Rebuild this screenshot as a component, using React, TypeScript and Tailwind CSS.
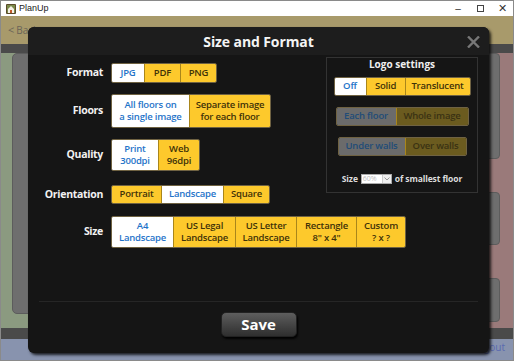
import React from "react";

/* 选项按钮的数据结构 */
type Opt = {
  lines: string[];
  w: string;
  on?: boolean;
};

type Tone = "normal" | "dim";

/* 一组分段按钮（外框 1px 计入尺寸） */
function Segmented({ opts, h, tone = "normal" }: { opts: Opt[]; h: string; tone?: Tone }) {
  return (
    <div className="flex rounded-[2px] border border-[#6f6242] overflow-hidden">
      {opts.map((o, i) => {
        let cls = "";
        if (tone === "normal") {
          cls = o.on ? "bg-white text-[#1f74c9]" : "bg-[#fdc92c] text-[#3f3208]";
        } else {
          cls = o.on ? "bg-[#6b6b6b] text-[#214c78]" : "bg-[#6b5b1f] text-[#3a3213]";
        }
        return (
          <div
            key={i}
            className={`${o.w} ${h} ${cls} ${i > 0 ? "border-l border-[#a9861b]" : ""} flex flex-col items-center justify-center text-[9.5px] leading-[12.5px] font-semibold tracking-[-0.2px]`}
          >
            {o.lines.map((l) => (
              <span key={l}>{l}</span>
            ))}
          </div>
        );
      })}
    </div>
  );
}

/* 左侧一行：标签 + 按钮组 */
function Row({ label, children, className = "" }: { label: string; children: React.ReactNode; className?: string }) {
  return (
    <div className={`flex items-center gap-[8px] ${className}`}>
      <div className="w-[75px] text-right text-[10.5px] font-bold tracking-[-0.3px] text-[#f2f2f2]">{label}</div>
      {children}
    </div>
  );
}

export default function App() {
  return (
    <div className="relative w-[514px] h-[361px] overflow-hidden border border-[#8a8a8a] font-['Open_Sans','Noto_Sans',sans-serif]">
      {/* 窗口标题栏 */}
      <div className="flex h-[15px] items-center bg-white font-['Liberation_Sans',sans-serif]">
        <svg width="10" height="10" viewBox="0 0 10 10" className="ml-[5px]">
          <rect width="10" height="10" rx="1" fill="#5b4a2a" />
          <rect x="1" y="1" width="8" height="8" fill="#7a8a4a" />
          <path d="M2 5 L5 2 L8 5 L8 9 L2 9 Z" fill="#f5f0e6" />
          <rect x="4" y="6" width="2" height="3" fill="#c05a2a" />
        </svg>
        <span className="ml-[3px] text-[9px] text-[#222]">PlanUp</span>
        <div className="ml-auto flex items-center text-[#333]">
          <span className="w-[22px] text-center text-[10px]">–</span>
          <span className="w-[22px] flex justify-center">
            <span className="block h-[7px] w-[7px] border border-[#444]" />
          </span>
          <span className="w-[22px] text-center text-[11px]">✕</span>
        </div>
      </div>

      {/* 应用顶部栏 */}
      <div className="flex h-[28px] items-center bg-[#a89a6b] pl-[7px] text-[10px] text-[#6a6558]">
        <span className="mr-[2px] text-[11px]">&lt;</span>
        <span>Back</span>
      </div>
      <div className="h-[9px] bg-[#4a4a4a]" />

      {/* 中间区域 */}
      <div className="flex h-[275px]">
        <div className="w-[470px] bg-[#8b9a80] pl-[11px] pb-[14px]">
          <div className="h-full rounded-l-[5px] border border-[#5c5c5c] bg-[#6e6e6e]" />
        </div>
        <div className="flex flex-1 flex-col gap-[33px] bg-[#9a7a7a] pb-[1px]">
          <div className="h-[106px] w-[29px] rounded-r-[4px] border border-[#5c5c5c] bg-[#6e6e6e]" />
          <div className="h-[53px] w-[29px] rounded-r-[4px] border border-[#5c5c5c] bg-[#6e6e6e]" />
          <div className="h-[44px] w-[29px] rounded-r-[4px] border border-[#5c5c5c] bg-[#6e6e6e]" />
        </div>
      </div>
      <div className="h-[11px] bg-[#4a4a4a]" />
      <div className="flex h-[22px] items-start justify-end bg-[#8893ae] pr-[8px] pt-[1px] text-[10px] text-[#5a6ab0]">
        Logout
      </div>

      {/* 弹窗 */}
      <div className="absolute left-[27px] top-[26px] flex h-[326px] w-[461px] flex-col rounded-[6px] bg-[#151515] shadow-[2px_2px_3px_rgba(0,0,0,0.8)]">
        <div className="relative flex h-[28px] items-center justify-center rounded-t-[6px] bg-[#1d1d1d]">
          <span className="text-[14px] font-bold tracking-[-0.1px] text-[#f4f4f4]">Size and Format</span>
          <svg width="13" height="12" viewBox="0 0 13 12" className="absolute right-[9px] top-[9px]">
            <path d="M1 0.5 L12 11.5 M12 0.5 L1 11.5" stroke="#777" strokeWidth="2.4" />
          </svg>
        </div>

        <div className="flex items-start">
          <div className="mt-[8px] flex flex-col">
            <Row label="Format">
              <Segmented
                h="h-[18px]"
                opts={[
                  { lines: ["JPG"], w: "w-[32px]", on: true },
                  { lines: ["PDF"], w: "w-[36px]" },
                  { lines: ["PNG"], w: "w-[36px]" },
                ]}
              />
            </Row>
            <Row label="Floors" className="mt-[11px]">
              <Segmented
                h="h-[32px]"
                opts={[
                  { lines: ["All floors on", "a single image"], w: "w-[77px]", on: true },
                  { lines: ["Separate image", "for each floor"], w: "w-[81px]" },
                ]}
              />
            </Row>
            <Row label="Quality" className="mt-[11px]">
              <Segmented
                h="h-[30px]"
                opts={[
                  { lines: ["Print", "300dpi"], w: "w-[46px]", on: true },
                  { lines: ["Web", "96dpi"], w: "w-[41px]" },
                ]}
              />
            </Row>
            <Row label="Orientation" className="mt-[14px]">
              <Segmented
                h="h-[17px]"
                opts={[
                  { lines: ["Portrait"], w: "w-[49px]" },
                  { lines: ["Landscape"], w: "w-[62px]", on: true },
                  { lines: ["Square"], w: "w-[46px]" },
                ]}
              />
            </Row>
          </div>

          {/* Logo 设置面板 */}
          <div className="ml-auto mr-[11px] mt-[2px] flex h-[136px] w-[152px] flex-col items-center border border-[#333]">
            <div className="mt-[-1px] text-[10px] font-bold text-[#eee]">Logo settings</div>
            <div className="mt-[5px]">
              <Segmented
                h="h-[17px]"
                opts={[
                  { lines: ["Off"], w: "w-[31px]", on: true },
                  { lines: ["Solid"], w: "w-[39px]" },
                  { lines: ["Translucent"], w: "w-[65px]" },
                ]}
              />
            </div>
            <div className="mt-[11px]">
              <Segmented
                tone="dim"
                h="h-[17px]"
                opts={[
                  { lines: ["Each floor"], w: "w-[59px]", on: true },
                  { lines: ["Whole image"], w: "w-[72px]" },
                ]}
              />
            </div>
            <div className="mt-[11px]">
              <Segmented
                tone="dim"
                h="h-[17px]"
                opts={[
                  { lines: ["Under walls"], w: "w-[66px]", on: true },
                  { lines: ["Over walls"], w: "w-[61px]" },
                ]}
              />
            </div>
            <div className="mt-[17px] flex items-center gap-[3px] text-[8.5px] font-bold tracking-[-0.1px] text-[#ddd]">
              <span>Size</span>
              <span className="flex h-[10px] w-[31px] items-center border border-[#aaa] bg-white">
                <span className="flex-1 pl-[1px] text-[7px] font-normal text-[#bbb]">60%</span>
                <span className="flex h-full w-[9px] items-center justify-center border-l border-[#ccc] bg-[#eee]">
                  <svg width="6" height="4" viewBox="0 0 6 4">
                    <path d="M0.5 0.5 L3 3 L5.5 0.5" stroke="#999" fill="none" />
                  </svg>
                </span>
              </span>
              <span>of smallest floor</span>
            </div>
          </div>
        </div>

        <Row label="Size" className="mt-[12px]">
          <Segmented
            h="h-[30px]"
            opts={[
              { lines: ["A4", "Landscape"], w: "w-[61px]", on: true },
              { lines: ["US Legal", "Landscape"], w: "w-[62px]" },
              { lines: ["US Letter", "Landscape"], w: "w-[61px]" },
              { lines: ["Rectangle", "8\" x 4\""], w: "w-[60px]" },
              { lines: ["Custom", "? x ?"], w: "w-[49px]" },
            ]}
          />
        </Row>

        <div className="mx-[11px] mt-[53px] h-px bg-[#262626]" />
        <div className="mt-[10px] flex justify-center">
          <button className="flex h-[25px] w-[76px] items-center justify-center rounded-[5px] border border-[#222] bg-gradient-to-b from-[#5e5e5e] to-[#2f2f2f] text-[15px] font-bold text-white shadow-[1px_2px_2px_rgba(0,0,0,0.9)]">
            Save
          </button>
        </div>
      </div>
    </div>
  );
}
